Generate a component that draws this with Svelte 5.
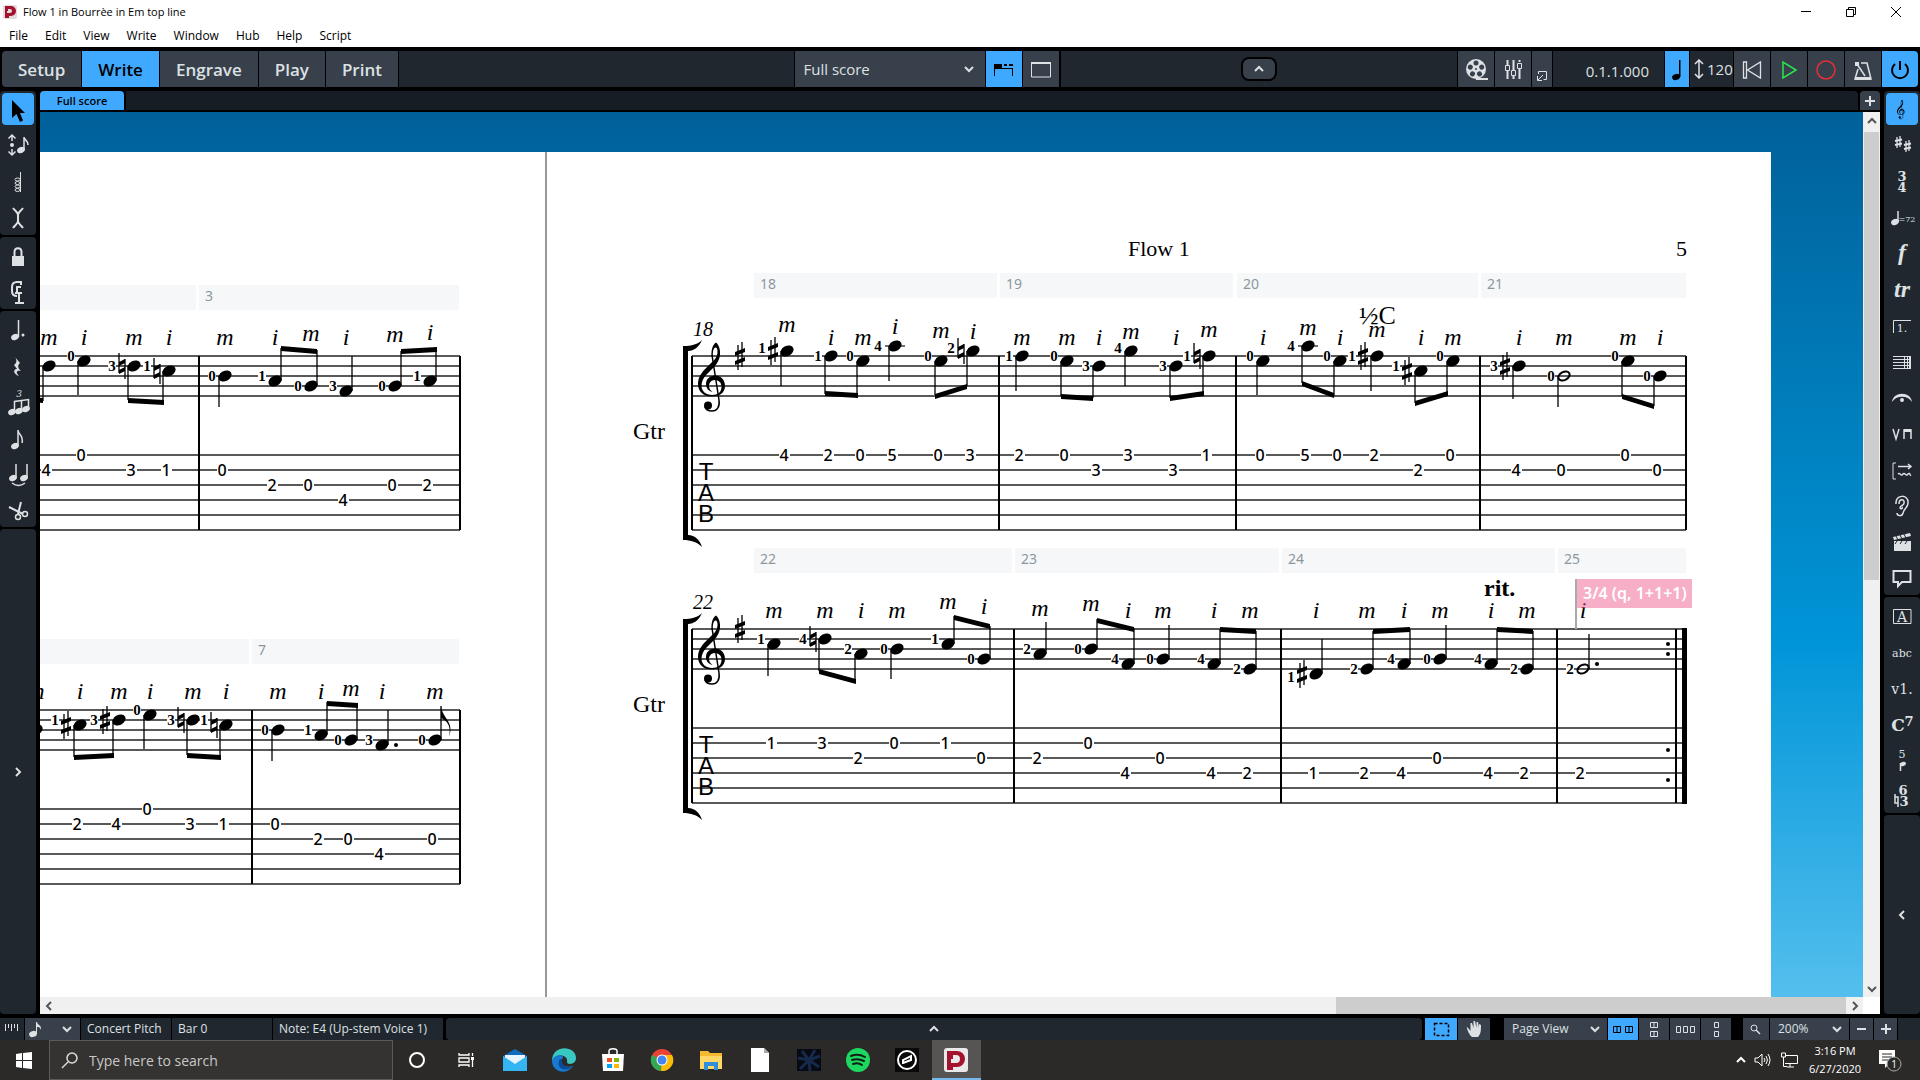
<script lang="ts">
  type Note = {
    x: number;
    pos: number; // half spaces below the top staff line
    letter: string;
    fret: number | null;
    string: number;
    finger?: number;
    acc?: 'sharp' | 'natural';
    up?: boolean;
    ly?: number; // letter baseline from the top staff line
    stem?: number;
    half?: boolean;
    dot?: boolean;
    flag?: boolean;
  };

  type System = {
    y: number;
    x1: number;
    x2: number;
    headY: number;
    start?: string;
    final?: boolean;
    bars: { label: string; x1: number; x2: number }[];
    lines: number[];
    notes: Note[];
    beams: [number, number, number, number][];
  };

  const n = (
    x: number,
    pos: number,
    letter: string,
    fret: number | null,
    string: number,
    finger?: number,
    opts: Partial<Note> = {}
  ): Note => ({ x, pos, letter, fret, string, finger, ...opts });

  const systems: System[] = [
    {
      y: 356, x1: 20, x2: 460, headY: 285,
      bars: [
        { label: '', x1: 20, x2: 196 },
        { label: '3', x1: 199, x2: 459 }
      ],
      lines: [199, 460],
      notes: [
        n(49, 2, 'm', 4, 1, undefined, { stem: 45 }),
        n(84, 1, 'i', 0, 0, 0, { stem: 39 }),
        n(134, 2, 'm', 3, 1, 3, { acc: 'natural', stem: 44 }),
        n(169, 3, 'i', 1, 1, 1, { acc: 'natural', stem: 46 }),
        n(225, 4, 'm', 0, 1, 0, { stem: 51 }),
        n(275, 5, 'i', 2, 2, 1, { up: true, stem: -8 }),
        n(311, 6, 'm', 0, 2, 0, { up: true, stem: -6, ly: -15 }),
        n(346, 7, 'i', 4, 3, 3, { up: true, stem: 0 }),
        n(395, 6, 'm', 0, 2, 0, { up: true, stem: -5, ly: -14 }),
        n(430, 5, 'i', 2, 2, 1, { up: true, stem: -8, ly: -16 })
      ],
      beams: [
        [20, 42, 43, 44],
        [128, 44, 164, 46],
        [281, -8, 317, -5],
        [401, -5, 437, -7]
      ]
    },
    {
      y: 710, x1: 20, x2: 460, headY: 639,
      bars: [
        { label: '', x1: 20, x2: 249 },
        { label: '7', x1: 252, x2: 459 }
      ],
      lines: [252, 460],
      notes: [
        n(36, 4, 'm', null, 0, undefined, { stem: 40 }),
        n(80, 3, 'i', 2, 1, 1, { acc: 'sharp', stem: 47 }),
        n(119, 2, 'm', 4, 1, 3, { acc: 'sharp', stem: 45 }),
        n(150, 1, 'i', 0, 0, 0, { stem: 39 }),
        n(193, 2, 'm', 3, 1, 3, { acc: 'natural', stem: 45 }),
        n(226, 3, 'i', 1, 1, 1, { acc: 'natural', stem: 47 }),
        n(278, 4, 'm', 0, 1, 0, { stem: 51 }),
        n(321, 5, 'i', 2, 2, 1, { up: true, stem: -8 }),
        n(351, 6, 'm', 0, 2, 0, { up: true, stem: -5, ly: -14 }),
        n(382, 7, 'i', 4, 3, 3, { up: true, stem: 0, dot: true }),
        n(435, 6, 'm', 0, 2, 0, { up: true, stem: -4, flag: true })
      ],
      beams: [
        [74, 47, 114, 45],
        [187, 45, 221, 47],
        [327, -7, 358, -5]
      ]
    },
    {
      y: 356, x1: 692, x2: 1686, headY: 273, start: '18',
      bars: [
        { label: '18', x1: 754, x2: 997 },
        { label: '19', x1: 1000, x2: 1233 },
        { label: '20', x1: 1237, x2: 1478 },
        { label: '21', x1: 1481, x2: 1686 }
      ],
      lines: [999, 1236, 1480, 1686],
      notes: [
        n(787, -1, 'm', 4, 0, 1, { acc: 'sharp', stem: 30, ly: -24 }),
        n(831, 0, 'i', 2, 0, 1, { stem: 38 }),
        n(863, 1, 'm', 0, 0, 0, { stem: 39 }),
        n(895, -2, 'i', 5, 0, 4, { stem: 25, ly: -22 }),
        n(941, 1, 'm', 0, 0, 0, { stem: 39, ly: -18 }),
        n(973, -1, 'i', 3, 0, 2, { acc: 'natural', stem: 30, ly: -17 }),
        n(1022, 0, 'm', 2, 0, 1, { stem: 35 }),
        n(1067, 1, 'm', 0, 0, 0, { stem: 40 }),
        n(1099, 2, 'i', 3, 1, 3, { stem: 42 }),
        n(1131, -1, 'm', 3, 0, 4, { stem: 30, ly: -17 }),
        n(1176, 2, 'i', 3, 1, 3, { stem: 42 }),
        n(1209, 0, 'm', 1, 0, 1, { acc: 'natural', stem: 37, ly: -19 }),
        n(1263, 1, 'i', 0, 0, 0, { stem: 39 }),
        n(1308, -2, 'm', 5, 0, 4, { stem: 27, ly: -21 }),
        n(1340, 1, 'i', 0, 0, 0, { stem: 40 }),
        n(1377, 0, 'm', 2, 0, 1, { acc: 'sharp', stem: 35, ly: -19 }),
        n(1421, 3, 'i', 2, 1, 1, { acc: 'sharp', stem: 47 }),
        n(1453, 1, 'm', 0, 0, 0, { stem: 38 }),
        n(1519, 2, 'i', 4, 1, 3, { acc: 'sharp', stem: 43 }),
        n(1564, 4, 'm', 0, 1, 0, { stem: 51, half: true }),
        n(1628, 1, 'm', 0, 0, 0, { stem: 40 }),
        n(1660, 4, 'i', 0, 1, 0, { stem: 50 })
      ],
      beams: [
        [825, 37, 858, 39],
        [935, 40, 967, 30],
        [1061, 40, 1093, 42],
        [1170, 42, 1204, 37],
        [1302, 27, 1334, 39],
        [1415, 47, 1448, 37],
        [1622, 40, 1654, 50]
      ]
    },
    {
      y: 629, x1: 692, x2: 1686, headY: 548, start: '22', final: true,
      bars: [
        { label: '22', x1: 754, x2: 1012 },
        { label: '23', x1: 1015, x2: 1279 },
        { label: '24', x1: 1282, x2: 1555 },
        { label: '25', x1: 1558, x2: 1686 }
      ],
      lines: [1014, 1281, 1557, 1676],
      notes: [
        n(774, 3, 'm', 1, 1, 1, { stem: 47 }),
        n(825, 2, 'm', 3, 1, 4, { acc: 'natural', stem: 42 }),
        n(861, 5, 'i', 2, 2, 2, { stem: 51 }),
        n(897, 4, 'm', 0, 1, 0, { stem: 50 }),
        n(948, 3, 'm', 1, 1, 1, { up: true, stem: -13, ly: -20 }),
        n(984, 6, 'i', 0, 2, 0, { up: true, stem: -3, ly: -15 }),
        n(1040, 5, 'm', 2, 2, 2, { up: true, stem: -7, ly: -13 }),
        n(1091, 4, 'm', 0, 1, 0, { up: true, stem: -10, ly: -18 }),
        n(1128, 7, 'i', 4, 3, 4, { up: true, stem: -1 }),
        n(1163, 6, 'm', 0, 2, 0, { up: true, stem: -4 }),
        n(1214, 7, 'i', 4, 3, 4, { up: true, stem: 0 }),
        n(1250, 8, 'm', 2, 3, 2, { up: true, stem: 2 }),
        n(1316, 9, 'i', 1, 3, 1, { up: true, stem: 10, acc: 'sharp' }),
        n(1367, 8, 'm', 2, 3, 2, { up: true, stem: 2 }),
        n(1404, 7, 'i', 4, 3, 4, { up: true, stem: 0 }),
        n(1440, 6, 'm', 0, 2, 0, { up: true, stem: -4 }),
        n(1491, 7, 'i', 4, 3, 4, { up: true, stem: 0 }),
        n(1527, 8, 'm', 2, 3, 2, { up: true, stem: 2 }),
        n(1583, 8, 'i', 2, 3, 2, { up: true, stem: 5, half: true, dot: true })
      ],
      beams: [
        [819, 42, 856, 52],
        [954, -12, 990, -3],
        [1097, -9, 1134, 0],
        [1220, 0, 1256, 2],
        [1373, 2, 1410, 0],
        [1497, 0, 1533, 2]
      ]
    }
  ];

  const staff = [0, 10, 20, 30, 40];
  const strings = [99, 114, 129, 144, 159, 174];

  function fingerX(note: Note) {
    if (note.acc === 'sharp') return note.x - 25;
    if (note.acc === 'natural') return note.x - 22;
    return note.x - (note.pos === -2 ? 17 : 13);
  }

  function fingerY(note: Note) {
    if (note.pos === -1) return -8;
    if (note.pos === 9) return 48;
    return (note.pos % 2 ? note.pos - 1 : note.pos) * 5;
  }

  const stroke = 'fill="none" stroke="currentColor"';
  const clef =
    '<path d="M13.5-30C13-36 15-42 18-43.5C21-41 22.500-36 22-31C21-22 13-16 9-12C5-8 3.500-4 3.500 0C3.500 5 8 9 14 9C20 9 23.500 6 23.500 1C23.500-4 20-6 17-6C13-6 11-3 11 0C11 2.500 12.500 4.500 14.500 6C10 5 8 1.500 8-2C8-7 12-10.500 17-10.500C23-10.500 27-6 27 0C27 7 21 10.500 14 10.500C6 10.500 0 6 0-2C0-10 5-15 10-20C15-25 19.500-28 19.500-34C19.500-37 19-38.500 17.500-38.500C15.500-38.500 14.500-34 15-30Z"/>' +
    `<path d="M14-31L21 14C22 21 19 25 14 25C11 25 8 24 7 21" ${stroke} stroke-width="1.500"/><circle cx="10" cy="19.500" r="4"/>`;
  const head = (x: number, y: number) =>
    `<ellipse cx="${x}" cy="${y}" rx="4" ry="3" transform="rotate(-25 ${x} ${y})"/>`;

  const icons: Record<string, string> = {
    Select: '<path d="M12 8V26L16.500 22L20 30L23 28.500L20 21H25Z"/>',
    Pitch: `<path d="M12 7V13M8.500 10.500L12 7L15.500 10.500M12 21V27M8.500 23.500L12 27L15.500 23.500" ${stroke} stroke-width="1.500"/><circle cx="12" cy="17" r="2"/>${head(21, 22)}<path d="M24 22V9C24 12 28 12 28 17" ${stroke} stroke-width="1.500"/>`,
    Chords: `<path d="M20.500 8V28" ${stroke}/><g ${stroke}><ellipse cx="17.500" cy="15.500" rx="2.500" ry="1.500"/><ellipse cx="17.500" cy="19" rx="2.500" ry="1.500"/><ellipse cx="17.500" cy="22.500" rx="2.500" ry="1.500"/><ellipse cx="17.500" cy="26" rx="2.500" ry="1.500"/></g>`,
    Insert: `<path d="M13 8C15 11 18 12 18 15C18 12 21 11 23 8M18 14V22M13 28C15 25 18 24 18 21C18 24 21 25 23 28" ${stroke} stroke-width="2"/>`,
    Lock: `<path d="M12 18H24V28H12Z"/><path d="M14.500 18V14C14.500 9 21.500 9 21.500 14V18" ${stroke} stroke-width="2"/>`,
    Clamp: `<path d="M21 11V8H17C13 8 12 10 12 13V17C12 20 14 22 17 22M21 13H17V19M19 18V29M15 19H22M15 29H24" ${stroke} stroke-width="2"/>`,
    Dotted: `${head(15, 25)}<path d="M18.500 25V8" ${stroke} stroke-width="1.500"/><circle cx="23" cy="23" r="1.500"/>`,
    Rest: '<path d="M15 9L20 15C17 18 18 20 21 23C17 22 15 24 19 28C13 26 13 21 17 21L14 17C17 15 17 12 15 9Z"/>',
    Tuplet: `<text x="19" y="13" class="glyph-italic">3</text>${head(12, 28)}${head(19, 27)}${head(26, 25)}<path d="M14.500 28V17.500L28.500 15.500V25M21.500 26V17" ${stroke} stroke-width="1.500"/>`,
    Grace: `${head(15, 26)}<path d="M18 26V10C18 15 24 15 22 23" ${stroke} stroke-width="1.500"/>`,
    Tie: `${head(13, 22)}${head(24, 22)}<path d="M16 22V8M27 22V8M12 27C16 30 21 30 25 27" ${stroke} stroke-width="1.500"/>`,
    Cut: `<path d="M9 15L23 22M21 10L18 22" ${stroke} stroke-width="2"/><circle cx="25" cy="22" r="2.500" ${stroke} stroke-width="1.500"/><circle cx="18" cy="25" r="2.500" ${stroke} stroke-width="1.500"/>`,
    Clefs: `<g transform="translate(13 20) scale(.28)">${clef}</g>`,
    'Key signatures': `<g ${stroke} stroke-width="1.300"><path d="M13 9V20M16 8V19M22 13V24M25 12V23"/><path stroke-width="2" d="M11 13L18 11.500M11 17L18 15.500M20 17L27 15.500M20 21L27 19.500"/></g>`,
    'Time signatures': '<text x="18" y="17" class="glyph-bold">3</text><text x="18" y="28" class="glyph-bold">4</text>',
    Tempo: `${head(11, 22)}<path d="M14 22V11" ${stroke} stroke-width="1.500"/><text x="23" y="22" class="glyph-tiny">=72</text>`,
    Dynamics: '<text x="18" y="24" class="glyph-dyn">f</text>',
    Ornaments: '<text x="18" y="25" class="glyph-dyn">tr</text>',
    Repeats: `<path d="M9.500 25V12.500H27" ${stroke}/><text x="18" y="24" class="glyph-small">1.</text>`,
    Bars: `<path d="M9 12.500H27M9 15.500H27M9 18.500H27M9 21.500H27M9 24.500H27M20.500 12V25M23.500 12V25" ${stroke}/><path d="M25 12H27V25H25Z"/>`,
    Holds: '<path d="M8 22C9 11 27 11 28 22C24 15 12 15 8 22Z"/><circle cx="18" cy="20" r="2"/>',
    Playing: `<path d="M9 13L12 23L15 13M20 23V14H27V23" ${stroke} stroke-width="1.500"/><path d="M20 13H27V16H20Z"/>`,
    Lines: `<path d="M12 11H9V27H12" ${stroke}/><path d="M14 14.500H26M24 12L27 14.500L24 17M14 22C16 20 17 25 19 22C21 20 22 25 24 22C26 20 26 24 27 23" ${stroke} stroke-width="1.500"/>`,
    Playback: `<path d="M12 16C11 6 25 6 24 15C24 20 20 20 19 25C18 29 13 28 13 25M15 16C15 10 21 11 20 15C20 18 16 17 16 20C17 22 19 20 18 19" ${stroke} stroke-width="1.500"/>`,
    Video: `<path d="M10 17H27V27H10ZM9 13L26 9L27 12L10 16Z"/><path d="M12 12L14 16M16 11L18 15M20 10L22 14M13 17L11 20M18 17L16 20M23 17L21 20" stroke="#21272e"/>`,
    Comments: `<path d="M9.500 11H26.500V22H18L14 26V22H9.500Z" ${stroke} stroke-width="2"/>`,
    'Rehearsal marks': `<path d="M9.500 11.500H27V25.500H9.500Z" ${stroke}/><text x="18" y="24" class="glyph-mid">A</text>`,
    Text: '<text x="18" y="23" class="glyph-small">abc</text>',
    Lyrics: '<text x="18" y="24" class="glyph-mid">v1.</text>',
    'Chord symbols': '<text x="14" y="25" class="glyph-big">C</text><text x="25" y="20" class="glyph-bold">7</text>',
    Fingering: `<text x="18" y="16" class="glyph-small">5</text><ellipse cx="19" cy="22" rx="3" ry="2" transform="rotate(-20 19 22)"/><path d="M16.500 21V29" ${stroke} stroke-width="1.500"/>`,
    'Figured bass': `<text x="19" y="17" class="glyph-bold">6</text><text x="20" y="28" class="glyph-bold">3</text><path d="M11 16V25H14M14 29V19H11" ${stroke} stroke-width="1.500"/>`
  };

  const leftGroups = [
    ['Select', 'Pitch', 'Chords', 'Insert'],
    ['Lock', 'Clamp'],
    ['Dotted', 'Rest', 'Tuplet', 'Grace', 'Tie', 'Cut']
  ];
  const rightGroups = [
    ['Clefs', 'Key signatures', 'Time signatures', 'Tempo', 'Dynamics', 'Ornaments', 'Repeats', 'Bars', 'Holds', 'Playing', 'Lines', 'Playback', 'Video', 'Comments'],
    ['Rehearsal marks', 'Text', 'Lyrics', 'Chord symbols', 'Fingering', 'Figured bass']
  ];

  const menus = ['File', 'Edit', 'View', 'Write', 'Window', 'Hub', 'Help', 'Script'];
  const modes = ['Setup', 'Write', 'Engrave', 'Play', 'Print'];
  let mode = $state('Write');
  let tool = $state('Select');
  let panel = $state('Clefs');

  const reel = [0, 72, 144, 216, 288];

  const apps: { name: string; art: string; active?: boolean }[] = [
    { name: 'Cortana', art: '<circle cx="24" cy="20" r="7" fill="none" stroke="#fff" stroke-width="2"/>' },
    { name: 'Task View', art: '<g fill="none" stroke="#fff" stroke-width="1.300"><path d="M17 13V15H27V13M17 27V25H27V27M17 18H27V22H17ZM30.500 13V16M30.500 20V27"/></g><path d="M29 17H32V20H29Z" fill="#fff"/>' },
    { name: 'Mail', art: '<path d="M12 16L24 9L36 16V31H12Z" fill="#0f6cbd"/><path d="M14 15H34V26H14Z" fill="#e8f4ff"/><path d="M12 16L24 24L36 16V31H12Z" fill="#35b4f2"/>' },
    { name: 'Edge', art: '<path d="M12 21C12 4 36 5 36 18C36 25 27 25 27 22C29 15 16 12 12 21Z" fill="#39c7c2"/><path d="M12 21C15 13 24 15 23 18C18 22 24 29 33 26C27 36 12 32 12 21Z" fill="#1679d2"/><path d="M20 19C15 27 24 33 32 27C26 28 21 25 22 19Z" fill="#0b4a94"/>' },
    { name: 'Store', art: '<path d="M13 14H35L34 31H14Z" fill="#fff"/><path d="M20 15V11C20 8 28 8 28 11V15" fill="none" stroke="#fff" stroke-width="1.500"/><path d="M18 18H23V22H18Z" fill="#f25022"/><path d="M25 18H30V22H25Z" fill="#7fba00"/><path d="M18 24H23V28H18Z" fill="#00a4ef"/><path d="M25 24H30V28H25Z" fill="#ffb900"/>' },
    { name: 'Chrome', art: '<circle cx="24" cy="20" r="11" fill="#ea4335"/><path d="M24 20L14 15A11 11 0 0 0 23 31Z" fill="#34a853"/><path d="M24 20L23 31A11 11 0 0 0 34 15H24Z" fill="#fbbc04"/><circle cx="24" cy="20" r="5.500" fill="#fff"/><circle cx="24" cy="20" r="4.500" fill="#4285f4"/>' },
    { name: 'File Explorer', art: '<path d="M13 11H21L23 13H35V29H13Z" fill="#f5b82e"/><path d="M13 16H35V29H13Z" fill="#ffd766"/><path d="M17 22H31V30H27V26H21V30H17Z" fill="#2f8fdd"/>' },
    { name: 'Documents', art: '<path d="M15 8H28L33 13V32H15Z" fill="#fff"/><path d="M28 8V13H33Z" fill="#aaa"/>' },
    { name: 'Studio', art: '<path d="M12 9H36V31H12Z" fill="#070a12"/><path d="M24 20L17 11M24 20L30 10M24 20L35 16M24 20L34 27M24 20L25 31M24 20L15 29M24 20L13 18" stroke="#15294a" stroke-width="3"/>' },
    { name: 'Spotify', art: '<circle cx="24" cy="20" r="12" fill="#1ed760"/><path d="M17 16Q24 13 31 17M18 20Q24 18 30 21M19 24Q24 22 28 25" fill="none" stroke="#102015" stroke-width="2" stroke-linecap="round"/>' },
    { name: 'Player', art: '<path d="M12 8H36V32H12Z" fill="#090909"/><circle cx="24" cy="20" r="9" fill="none" stroke="#fff" stroke-width="2"/><path d="M20 24V20L28 16V20L20 23" fill="none" stroke="#fff" stroke-width="2"/>' },
    { name: 'Dorico', active: true, art: '<rect x="12" y="8" width="24" height="24" rx="3" fill="#e9e9e9"/><path fill-rule="evenodd" d="M15 11H25A8 8 0 0 1 25 27H21V30H15ZM21 15V19H19V23H24A4 4 0 0 0 24 15Z" fill="#a5122d"/>' }
  ];
</script>

{#snippet chevron(dir: string)}
  <svg class="chevron {dir}" width="12" height="12" aria-hidden="true">
    <path d="M2 4L6 8L10 4" fill="none" stroke="currentColor" stroke-width="2" />
  </svg>
{/snippet}

{#snippet toolbox(groups: string[][], active: string, pick: (name: string) => void, dir: string)}
  <aside class="toolbox">
    {#each groups as group}
      <div class="tool-group">
        {#each group as name}
          <button class="tool" class:active={name === active} type="button" aria-label={name} onclick={() => pick(name)}>
            <svg width="36" height="36" viewBox="0 -1 36 36">{@html icons[name]}</svg>
          </button>
        {/each}
      </div>
    {/each}
    <button class="tool-group expander" type="button" aria-label="Toggle panel">{@render chevron(dir)}</button>
  </aside>
{/snippet}

<div class="window">
  <header class="titlebar">
    <svg width="14" height="14" aria-hidden="true">
      <rect width="14" height="14" rx="2" fill="#e2dcdd" />
      <path d="M2 1H8A5 5 0 0 1 8 11H6V13H2ZM5 4V6H4V8H7A2 2 0 0 0 7 4Z" fill="#a5122d" fill-rule="evenodd" />
    </svg>
    <span class="title">Flow 1 in Bourrèe in Em top line</span>
    <div class="window-buttons">
      <button type="button" aria-label="Minimise"><svg width="12" height="12"><path d="M1 5.500H11" /></svg></button>
      <button type="button" aria-label="Restore"><svg width="12" height="12"><path d="M1.500 3.500H8.500V10.500H1.500ZM3.500 3V1.500H10.500V8.500H9" /></svg></button>
      <button type="button" aria-label="Close"><svg width="12" height="12"><path d="M1 1L11 11M11 1L1 11" /></svg></button>
    </div>
  </header>
  <nav class="menubar">
    {#each menus as menu}<button type="button">{menu}</button>{/each}
  </nav>

  <div class="toolbar">
    <div class="modes">
      {#each modes as name}
        <button type="button" class:active={name === mode} onclick={() => (mode = name)}>{name}</button>
      {/each}
    </div>
    <div class="filler"></div>
    <label class="layout-select">
      <select aria-label="Layout"><option>Full score</option></select>
      {@render chevron('down')}
    </label>
    <button class="tb active" type="button" aria-label="Show tabs">
      <svg width="36" height="36"><path d="M8 13H16V17H27V25H26V18H9V25H8ZM18 13H21V15H18ZM23 13H27V15H23Z" /></svg>
    </button>
    <button class="tb" type="button" aria-label="Show window">
      <svg width="36" height="36"><path d="M8.500 12H27.500V26H8.500Z" fill="none" stroke="currentColor" /><path d="M8 11H28V13H8Z" /></svg>
    </button>
    <div class="filler centre">
      <button class="collapse" type="button" aria-label="Hide toolbars">{@render chevron('up')}</button>
    </div>
    <button class="tb" type="button" aria-label="Video">
      <svg width="36" height="36">
        <circle cx="18" cy="18" r="10" />
        {#each reel as angle}<circle cx="18" cy="12" r="2.500" fill="#38404b" transform="rotate({angle} 18 18)" />{/each}
        <circle cx="18" cy="18" r="1" fill="#38404b" />
        <path d="M18 27H30V29H18Z" />
      </svg>
    </button>
    <button class="tb" type="button" aria-label="Mixer">
      <svg width="36" height="36" class="line">
        <path d="M12.500 9V14M12.500 20V28M18.500 9V19M18.500 24V28M24.500 9V11M24.500 18V28" stroke-width="2" />
        <path d="M10.500 14.500H14.500V19.500H10.500ZM16.500 19.500H20.500V24.500H16.500ZM22.500 12.500H26.500V17.500H22.500Z" />
      </svg>
    </button>
    <button class="tb narrow" type="button" aria-label="Open in window">
      <svg width="20" height="36" class="line"><path d="M6.500 23V20.500H14.500V28.500H11.500M11 24L6 29M5.500 25V29.500H10" /></svg>
    </button>
    <span class="position">0.1.1.000</span>
    <button class="tb beat active" type="button" aria-label="Beat unit">
      <svg width="24" height="36"><ellipse cx="11" cy="26" rx="4" ry="3" transform="rotate(-20 11 26)" /><path d="M14 9H15.500V26H14Z" /></svg>
    </button>
    <span class="tempo">
      <svg width="10" height="20" class="line"><path d="M5 1V19M1 5L5 1L9 5M1 15L5 19L9 15" stroke-width="1.500" /></svg>120
    </span>
    <button class="tb" type="button" aria-label="Rewind">
      <svg width="36" height="36" class="line"><path d="M9.500 11V27H12.500V11ZM26.500 11V27L13.500 19Z" stroke-width="1.300" /></svg>
    </button>
    <button class="tb play" type="button" aria-label="Play">
      <svg width="36" height="36" class="line"><path d="M12 11V27L25 19Z" stroke-width="1.500" /></svg>
    </button>
    <button class="tb record" type="button" aria-label="Record">
      <svg width="36" height="36" class="line"><circle cx="18" cy="19" r="9" stroke-width="1.500" /></svg>
    </button>
    <button class="tb" type="button" aria-label="Metronome">
      <svg width="36" height="36" class="line"><path d="M16 12H22L26 28H10L13 18M12 13L20 25" stroke-width="1.500" /><path d="M10 26H26V29H10ZM10 11H14V15H10Z" fill="currentColor" stroke="none" /></svg>
    </button>
    <button class="tb active last" type="button" aria-label="Power">
      <svg width="36" height="36" class="line"><path d="M13 13A8 8 0 1 0 23 13M18 10V19" stroke-width="2" /></svg>
    </button>
  </div>

  <main>
    {@render toolbox(leftGroups, tool, (name) => (tool = name), 'right')}
    <section class="document">
      <div class="tabs">
        <button class="tab" type="button">Full score</button>
        <div class="tab-space"></div>
        <button class="add-tab" type="button" aria-label="New tab"><svg width="12" height="12"><path d="M5 1H7V5H11V7H7V11H5V7H1V5H5Z" /></svg></button>
      </div>
      <div class="view">
        <div class="canvas">
          <svg class="score" width="100%" height="100%" role="img" aria-label="Guitar score">
            <g transform="translate(-40 -112)">
              <rect class="page" x="0" y="152" width="1771" height="1200" />
              <path class="page-edge" d="M546 152V1300" />

              {#each systems as sys}
                {#each sys.bars as bar}
                  <rect class="bar-head" x={bar.x1} y={sys.headY} width={bar.x2 - bar.x1} height="25" rx="1" />
                  <text class="bar-label" x={bar.x1 + 6} y={sys.headY + 16}>{bar.label}</text>
                {/each}
                {#each [...staff, ...strings] as line}
                  <path class="staff" d="M{sys.x1} {sys.y + line}H{sys.x2}" />
                {/each}
                {#each sys.lines as x}
                  <path class="barline" d="M{x} {sys.y}V{sys.y + 174}" />
                {/each}

                {#if sys.start}
                  <path class="barline" d="M{sys.x1} {sys.y}V{sys.y + 174}" />
                  <path d="M683 {sys.y - 10}C692 {sys.y - 10} 698 {sys.y - 12} 702 {sys.y - 16}C699 {sys.y - 9} 694 {sys.y - 5} 688 {sys.y - 5}V{sys.y + 179}C695 {sys.y + 179} 700 {sys.y + 184} 702 {sys.y + 191}C697 {sys.y + 186} 691 {sys.y + 184} 683 {sys.y + 184}Z" />
                  <text class="bar-number" x="703" y={sys.y - 20}>{sys.start}</text>
                  <text class="heading name" x="633" y={sys.y + 83}>Gtr</text>
                  <g transform="translate(698 {sys.y + 30})">{@html clef}</g>
                  {@render accidental('sharp', 740, sys.y)}
                  {#each ['T', 'A', 'B'] as letter, i}
                    <text class="tab-clef" x="706" y={sys.y + 124 + i * 21}>{letter}</text>
                  {/each}
                {/if}
                {#if sys.final}
                  <rect x="1682" y={sys.y - 1} width="5" height="176" />
                  {#each [15, 25, 121, 151] as dy}<circle cx="1668" cy={sys.y + dy} r="2" />{/each}
                {/if}

                {#each sys.beams as [x1, y1, x2, y2]}
                  <path d="M{x1} {sys.y + y1 - 2}L{x2} {sys.y + y2 - 2}V{sys.y + y2 + 3}L{x1} {sys.y + y1 + 3}Z" />
                {/each}

                {#each sys.notes as note}
                  {@const y = sys.y + note.pos * 5}
                  {#if note.finger !== undefined}
                    <rect class="mask" x={fingerX(note) - 4} y={sys.y + fingerY(note) - 4} width="8" height="8" />
                    <text class="finger" x={fingerX(note)} y={sys.y + fingerY(note) + 5}>{note.finger}</text>
                  {/if}
                  {#if note.acc}
                    {@render accidental(note.acc, note.x - (note.acc === 'sharp' ? 14 : 12), y)}
                  {/if}
                  {#if note.pos === -2}<path class="staff" d="M{note.x - 10} {y}H{note.x + 10}" />{/if}
                  {#if note.half}
                    <ellipse class="half" cx={note.x} cy={y} rx="6" ry="4" transform="rotate(-28 {note.x} {y})" />
                  {:else}
                    <ellipse cx={note.x} cy={y} rx="7" ry="5" transform="rotate(-28 {note.x} {y})" />
                  {/if}
                  <path class="stem" d="M{note.x + (note.up ? 6 : -6)} {y}V{sys.y + (note.stem ?? 0)}" />
                  {#if note.flag}
                    <path d="M{note.x + 6} {sys.y - 4}C{note.x + 7} {sys.y + 8} {note.x + 20} {sys.y + 12} {note.x + 14} {sys.y + 27}C{note.x + 17} {sys.y + 14} {note.x + 10} {sys.y + 10} {note.x + 6} {sys.y + 8}Z" />
                  {/if}
                  {#if note.dot}<circle cx={note.x + 14} cy={note.half ? y - 5 : y} r="2" />{/if}
                  <text class="pluck" x={note.x} y={sys.y + (note.ly ?? -11)}>{note.letter}</text>
                  {#if note.fret !== null}
                    <rect class="mask" x={note.x - 8} y={sys.y + strings[note.string] - 5} width="11" height="10" />
                    <text class="fret" x={note.x - 3} y={sys.y + strings[note.string] + 6}>{note.fret}</text>
                  {/if}
                {/each}
              {/each}

              <text class="heading" x="1128" y="256">Flow 1</text>
              <text class="heading" x="1676" y="256">5</text>
              <text class="barre" x="1359" y="324">½C</text>
              <text class="rit" x="1484" y="596">rit.</text>
              <path class="signpost-line" d="M1576 579V629" />
              <rect class="signpost" x="1577" y="579" width="115" height="29" />
              <text class="signpost-text" x="1583" y="599">3/4 (q, 1+1+1)</text>
            </g>
          </svg>
        </div>
        <div class="vscroll">
          <button type="button" aria-label="Scroll up">{@render chevron('up')}</button>
          <div class="vtrack"><div class="vthumb"></div></div>
          <button type="button" aria-label="Scroll down">{@render chevron('down')}</button>
        </div>
        <div class="hscroll">
          <button type="button" aria-label="Scroll left">{@render chevron('left')}</button>
          <div class="htrack"><div class="hthumb"></div></div>
          <button type="button" aria-label="Scroll right">{@render chevron('right')}</button>
        </div>
        <div class="corner"></div>
      </div>
    </section>
    {@render toolbox(rightGroups, panel, (name) => (panel = name), 'left')}
  </main>

  <div class="status">
    <span class="keys"><svg width="22" height="22" class="line"><path d="M5.500 6V13M8.500 6V10M11.500 6V13M14.500 6V10M17.500 6V13" /></svg></span>
    <button class="duration" type="button" aria-label="Note duration">
      <svg width="24" height="22"><ellipse cx="8" cy="16" rx="4" ry="3" transform="rotate(-20 8 16)" /><path d="M11 4H12C12 7 17 7 16 12C15 9 14 9 12 9V16H11Z" /></svg>
      {@render chevron('down')}
    </button>
    <span class="cell pitch">Concert Pitch</span>
    <span class="cell bar">Bar 0</span>
    <span class="cell selection">Note: E4 (Up-stem Voice 1)</span>
    <button class="lower" type="button" aria-label="Show lower panel">{@render chevron('up')}</button>
    <button class="sb wide active" type="button" aria-label="Marquee tool">
      <svg width="32" height="22" class="line"><path d="M9.500 5.500H23.500V17.500H9.500Z" stroke-dasharray="3 2" stroke-width="1.500" /></svg>
    </button>
    <button class="sb wide" type="button" aria-label="Hand tool">
      <svg width="32" height="22"><path d="M11 11L9 9C8 10 12 18 14 19H20C23 16 23 12 23 7L21 6V10L20 4H18.500V10L17 3H15.500V10L14 5H12.500V13Z" /></svg>
    </button>
    <label class="status-select view-type">
      <select aria-label="View type"><option>Page View</option></select>
      {@render chevron('down')}
    </label>
    <button class="sb active" type="button" aria-label="Spreads horizontally"><svg width="30" height="22" class="line"><path d="M5.500 8.500H12.500V14.500H5.500ZM17.500 8.500H24.500V14.500H17.500ZM9 8V15M21 8V15" /></svg></button>
    <button class="sb" type="button" aria-label="Spreads vertically"><svg width="30" height="22" class="line"><path d="M11.500 4.500H18.500V9.500H11.500ZM11.500 13.500H18.500V18.500H11.500ZM15 5V9M15 14V18" /></svg></button>
    <button class="sb" type="button" aria-label="Pages horizontally"><svg width="30" height="22" class="line"><path d="M6.500 8.500H10.500V14.500H6.500ZM13.500 8.500H17.500V14.500H13.500ZM20.500 8.500H24.500V14.500H20.500Z" /></svg></button>
    <button class="sb" type="button" aria-label="Pages vertically"><svg width="30" height="22" class="line"><path d="M13.500 4.500H17.500V9.500H13.500ZM13.500 13.500H17.500V18.500H13.500Z" /></svg></button>
    <button class="sb find" type="button" aria-label="Zoom"><svg width="26" height="22" class="line"><circle cx="11" cy="10" r="3" /><path d="M13 12L17 16" stroke-width="1.500" /></svg></button>
    <label class="status-select zoom">
      <select aria-label="Zoom level"><option>200%</option></select>
      {@render chevron('down')}
    </label>
    <button class="sb tiny" type="button" aria-label="Zoom out"><svg width="23" height="22"><path d="M7 10H16V12H7Z" /></svg></button>
    <button class="sb tiny" type="button" aria-label="Zoom in"><svg width="23" height="22"><path d="M7 10H11V6H13V10H17V12H13V16H11V12H7Z" /></svg></button>
    <span class="status-end"></span>
  </div>

  <footer class="taskbar">
    <button class="start" type="button" aria-label="Start"><svg width="48" height="40"><path d="M16 14L22 13V20H16ZM23 13L32 12V20H23ZM16 21H22V28L16 27ZM23 21H32V29L23 28Z" fill="#fff" /></svg></button>
    <label class="search">
      <svg width="18" height="18"><circle cx="11" cy="7" r="5" fill="none" stroke="#ddd" stroke-width="1.500" /><path d="M7 11L1 17" stroke="#ddd" stroke-width="1.500" /></svg>
      <input type="text" placeholder="Type here to search" aria-label="Search" />
    </label>
    {#each apps as app}
      <button class="app" class:running={app.active} type="button" aria-label={app.name}><svg width="48" height="40">{@html app.art}</svg></button>
    {/each}
    <div class="tray">
      <button type="button" aria-label="Hidden icons">{@render chevron('up')}</button>
      <svg width="20" height="18" class="line"><path d="M2 7H5L9 3V15L5 11H2ZM11 7Q13 9 11 11M13 5Q16 9 13 13M15 3Q19 9 15 15" /></svg>
      <svg width="20" height="18" class="line"><path d="M6 4.500H18.500V12.500H6M11 13V16M8 16H15M2.500 2V6H6.500V2ZM4.500 6V15.500H8" /></svg>
      <div class="clock"><span>3:16 PM</span><span>6/27/2020</span></div>
      <button class="notify" type="button" aria-label="Notifications">
        <svg width="30" height="30"><path d="M5 5H21V19H15L11 23V19H5Z" fill="#fff" /><path d="M8 9H18M8 12H18M8 15H14" stroke="#2b2a29" /><circle cx="20" cy="19" r="7" fill="#2b2a29" stroke="#aaa" /><text x="20" y="23">1</text></svg>
      </button>
    </div>
  </footer>
</div>

{#snippet accidental(kind: string, x: number, y: number)}
  {#if kind === 'sharp'}
    <path class="acc" d="M{x - 2} {y - 11}V{y + 14}M{x + 2} {y - 14}V{y + 11}" />
    <path d="M{x - 5} {y - 4}L{x + 5} {y - 8}V{y - 4}L{x - 5} {y}ZM{x - 5} {y + 5}L{x + 5} {y + 1}V{y + 5}L{x - 5} {y + 9}Z" />
  {:else}
    <path class="acc" d="M{x - 3} {y - 13}V{y + 7}M{x + 3} {y - 7}V{y + 13}" />
    <path d="M{x - 3} {y - 4}L{x + 3} {y - 7}V{y - 3}L{x - 3} {y}ZM{x - 3} {y + 4}L{x + 3} {y + 1}V{y + 5}L{x - 3} {y + 8}Z" />
  {/if}
{/snippet}

<style>
  :global(body) {
    background: #000;
  }

  .window {
    height: 100vh;
    display: flex;
    flex-direction: column;
    background: #000;
    color: #dde1e4;
    font-family: 'Open Sans', 'Noto Sans', sans-serif;
    font-size: 12px;
    overflow: hidden;
  }

  button,
  select,
  input {
    appearance: none;
    border: none;
    border-radius: 0;
    margin: 0;
    padding: 0;
    background: none;
    color: inherit;
    font: inherit;
  }

  svg {
    display: block;
    fill: currentColor;
    flex: none;
  }

  .line {
    fill: none;
    stroke: currentColor;
  }

  .chevron.up {
    transform: rotate(180deg);
  }
  .chevron.left {
    transform: rotate(90deg);
  }
  .chevron.right {
    transform: rotate(-90deg);
  }

  .titlebar {
    height: 23px;
    flex: none;
    display: flex;
    align-items: center;
    padding: 0 2px 0 3px;
    gap: 6px;
    background: #fff;
    color: #000;
    font-size: 11px;
  }
  .window-buttons {
    margin-left: auto;
    display: flex;
  }
  .window-buttons button {
    width: 45px;
    height: 20px;
    display: grid;
    place-items: center;
  }
  .window-buttons svg {
    fill: none;
    stroke: #000;
  }

  .menubar {
    height: 24px;
    flex: none;
    display: flex;
    align-items: center;
    gap: 17px;
    padding-left: 9px;
    background: #fff;
    color: #000;
  }

  .toolbar {
    height: 36px;
    flex: none;
    display: flex;
    gap: 1px;
    padding: 4px 2px;
  }
  .modes {
    display: flex;
    gap: 1px;
    font-size: 17px;
    font-weight: 600;
  }
  .modes button {
    padding: 0 16px;
    background: #38404b;
  }
  .modes button:first-child {
    border-radius: 4px 0 0 4px;
  }
  .modes .active,
  .tb.active,
  .sb.active {
    background: #3fa9ff;
    color: #000;
  }
  .filler {
    flex: 1;
    background: #21272e;
  }
  .centre {
    display: grid;
    place-items: center;
    margin-left: 1px;
  }
  .collapse {
    width: 36px;
    height: 24px;
    border: 2px solid #000;
    border-radius: 8px;
    background: #38404b;
    display: grid;
    place-items: center;
  }
  .layout-select {
    width: 190px;
    display: flex;
    align-items: center;
    padding-right: 10px;
    box-sizing: border-box;
    background: #38404b;
    font-size: 15px;
  }
  select {
    flex: 1;
    min-width: 0;
    padding-left: 8px;
  }
  .tb {
    width: 36px;
    background: #38404b;
  }
  .tb.narrow {
    width: 20px;
  }
  .tb.beat {
    width: 24px;
  }
  .tb.last {
    border-radius: 0 4px 4px 0;
  }
  .play {
    color: #27e84c;
  }
  .record {
    color: #e62e3a;
  }
  .position {
    width: 111px;
    box-sizing: border-box;
    padding-right: 15px;
    text-align: right;
    line-height: 40px;
    background: #21272e;
    font-size: 15px;
  }
  .tempo {
    width: 43px;
    display: flex;
    align-items: center;
    gap: 3px;
    padding-left: 4px;
    box-sizing: border-box;
    background: #21272e;
    font-size: 15px;
  }

  main {
    flex: 1;
    min-height: 0;
    display: flex;
    gap: 4px;
  }
  .toolbox {
    width: 36px;
    flex: none;
    display: flex;
    flex-direction: column;
    gap: 2px;
  }
  .tool-group {
    background: #21272e;
    border-radius: 4px;
  }
  .tool {
    display: block;
    width: 36px;
    height: 36px;
  }
  .tool.active {
    color: #000;
    background: #3fa9ff;
    border: 2px solid #21272e;
    border-radius: 6px;
  }
  .tool.active svg {
    margin: -2px;
  }
  .expander {
    flex: 1;
    display: grid;
    place-items: center;
  }
  .toolbox :global(text) {
    font-family: 'DejaVu Serif', serif;
    text-anchor: middle;
  }
  .toolbox :global(.glyph-italic) {
    font-size: 9px;
    font-style: italic;
  }
  .toolbox :global(.glyph-bold) {
    font-size: 13px;
    font-weight: 700;
  }
  .toolbox :global(.glyph-tiny) {
    font-size: 8px;
  }
  .toolbox :global(.glyph-small) {
    font-size: 11px;
  }
  .toolbox :global(.glyph-mid) {
    font-size: 14px;
  }
  .toolbox :global(.glyph-big) {
    font-size: 17px;
    font-weight: 700;
  }
  .toolbox :global(.glyph-dyn) {
    font-family: 'Liberation Serif', serif;
    font-size: 24px;
    font-style: italic;
    font-weight: 700;
  }

  .document {
    flex: 1;
    min-width: 0;
    display: flex;
    flex-direction: column;
  }
  .tabs {
    height: 19px;
    flex: none;
    display: flex;
    gap: 2px;
    padding-bottom: 2px;
  }
  .tab {
    width: 84px;
    border-radius: 4px 4px 0 0;
    background: #3fa9ff;
    color: #000;
    font-size: 11px;
    font-weight: 600;
  }
  .tab-space {
    flex: 1;
    background: #171d24;
    border-radius: 0 4px 0 0;
  }
  .add-tab {
    width: 20px;
    background: #38404b;
    border-radius: 4px 4px 0 0;
    display: grid;
    place-items: center;
  }
  .view {
    flex: 1;
    min-height: 0;
    display: grid;
    grid-template: minmax(0, 1fr) 17px / minmax(0, 1fr) 17px;
  }
  .canvas {
    overflow: hidden;
    background: linear-gradient(#00609a, #0072ae 20%, #0095d8 60%, #54bfee);
  }
  .score {
    fill: #000;
    color: #000;
    font-family: 'Liberation Serif', serif;
  }
  .page,
  .mask {
    fill: #fff;
  }
  .page-edge {
    stroke: #333;
  }
  .bar-head {
    fill: #f5f7f9;
  }
  .bar-label {
    font: 14px 'Noto Sans', sans-serif;
    fill: #8c979d;
  }
  .staff {
    stroke: #222;
    stroke-width: 1.3px;
  }
  .stem,
  .acc {
    stroke: #000;
    stroke-width: 1.3px;
  }
  .barline {
    stroke: #000;
    stroke-width: 2px;
  }
  .half {
    fill: none;
    stroke: #000;
    stroke-width: 2px;
  }
  .heading {
    font-size: 22px;
  }
  .heading.name {
    font-size: 24px;
  }
  .bar-number {
    font-size: 20px;
    font-style: italic;
    text-anchor: middle;
  }
  .barre {
    font-size: 26px;
  }
  .rit {
    font-size: 24px;
    font-weight: 700;
  }
  .pluck {
    font-size: 24px;
    font-style: italic;
    text-anchor: middle;
  }
  .finger {
    font-size: 15px;
    font-weight: 700;
    text-anchor: middle;
  }
  .fret {
    font: 500 16px 'Noto Sans', sans-serif;
    text-anchor: middle;
  }
  .tab-clef {
    font: 24px 'Liberation Sans', sans-serif;
    text-anchor: middle;
  }
  .signpost {
    fill: #f05f91;
    opacity: 0.5;
  }
  .signpost-line {
    stroke: #aaa;
    stroke-width: 2px;
  }
  .signpost-text {
    font: 600 16px 'Noto Sans', sans-serif;
    fill: #fff;
  }

  .vscroll,
  .hscroll {
    display: flex;
    background: #f0f0f0;
    color: #555;
  }
  .vscroll {
    flex-direction: column;
  }
  .vscroll button,
  .hscroll button {
    width: 17px;
    height: 17px;
    display: grid;
    place-items: center;
  }
  .vtrack,
  .htrack {
    flex: 1;
    display: flex;
  }
  .vtrack {
    padding: 3px 1px;
  }
  .htrack {
    justify-content: flex-end;
  }
  .vthumb {
    flex: 1;
    height: 53%;
    background: #cdcdcd;
  }
  .hthumb {
    width: 28.5%;
    background: #cdcdcd;
  }
  .corner {
    background: #fff;
  }

  .status {
    height: 22px;
    flex: none;
    margin-top: 4px;
    display: flex;
    gap: 1px;
    line-height: 22px;
  }
  .status > * {
    background: #21272e;
  }
  .keys {
    width: 24px;
  }
  .duration {
    width: 55px;
    display: flex;
    align-items: center;
    justify-content: space-between;
    padding-right: 7px;
    box-sizing: border-box;
    background: #38404b;
  }
  .cell {
    padding-left: 6px;
    box-sizing: border-box;
    white-space: nowrap;
  }
  .pitch {
    width: 90px;
  }
  .bar {
    width: 100px;
  }
  .selection {
    width: 170px;
  }
  .lower {
    flex: 1;
    display: grid;
    place-items: center;
    border-radius: 4px;
    margin: 0 2px;
  }
  .sb {
    width: 30px;
    background: #38404b;
  }
  .sb.wide {
    width: 32px;
  }
  .sb.tiny {
    width: 23px;
  }
  .find {
    width: 26px;
    margin-left: 11px;
  }
  .status-select {
    display: flex;
    align-items: center;
    padding-right: 6px;
    box-sizing: border-box;
    background: #38404b;
  }
  .view-type {
    width: 103px;
    margin-left: 13px;
  }
  .zoom {
    width: 79px;
  }
  .status-end {
    width: 22px;
  }

  .taskbar {
    height: 40px;
    flex: none;
    display: flex;
    background: #2b2a29;
    color: #fff;
  }
  .start {
    width: 49px;
  }
  .search {
    width: 344px;
    box-sizing: border-box;
    display: flex;
    align-items: center;
    gap: 10px;
    padding-left: 11px;
    border: 1px solid #5c5b5a;
    background: #343332;
  }
  .search input {
    flex: 1;
    font-size: 14px;
  }
  .search input::placeholder {
    color: #c8c8c8;
  }
  .app {
    width: 49px;
  }
  .app.running {
    background: #565554;
    box-shadow: inset 0 -2px #76b9ed;
  }
  .tray {
    margin-left: auto;
    display: flex;
    align-items: center;
    gap: 6px;
    padding-right: 16px;
  }
  .clock {
    width: 60px;
    display: flex;
    flex-direction: column;
    align-items: center;
    line-height: 18px;
    font-size: 11px;
  }
  .notify {
    margin-left: 3px;
  }
  .notify text {
    font-size: 10px;
    text-anchor: middle;
  }
</style>
